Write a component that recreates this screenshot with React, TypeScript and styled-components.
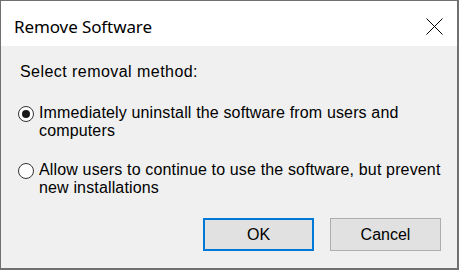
import React from 'react';
import styled, { createGlobalStyle } from 'styled-components';

const GlobalStyle = createGlobalStyle`
    html, body {
        margin: 0;
        padding: 0;
        background: #ffffff;
    }
    * {
        box-sizing: border-box;
    }
`;

const Window = styled.div`
    width: 459px;
    height: 270px;
    border: 1px solid #707070;
    border-right-width: 2px;
    border-bottom-width: 2px;
    display: flex;
    flex-direction: column;
    background: #f0f0f0;
    overflow: hidden;
`;

const TitleBar = styled.div`
    height: 45px;
    flex-shrink: 0;
    background: #ffffff;
    display: flex;
    align-items: center;
    justify-content: space-between;
    padding: 0 14px 0 13px;
`;

const Title = styled.span`
    font-family: "Noto Sans", "Open Sans", sans-serif;
    font-size: 17px;
    letter-spacing: -0.1px;
    color: #000000;
    margin-top: 6px;
`;

const CloseButton = styled.div`
    width: 18px;
    height: 18px;
    display: flex;
    align-items: center;
    justify-content: center;
    margin-top: 6px;
`;

const Body = styled.div`
    flex: 1;
    display: flex;
    flex-direction: column;
    padding: 17px 16px 0 17px;
    font-family: "Liberation Sans", Arial, sans-serif;
    font-size: 16px;
    letter-spacing: 0.15px;
    line-height: 18px;
    color: #000000;
`;

const Label = styled.div`
    letter-spacing: 0.45px;
    padding-left: 2px;
`;

const Options = styled.div`
    display: flex;
    flex-direction: column;
    gap: 21px;
    margin-top: 23px;
`;

const Option = styled.div`
    display: flex;
    align-items: flex-start;
    gap: 5px;
`;

const Radio = styled.span<{ $checked?: boolean }>`
    width: 16px;
    height: 16px;
    margin-top: 2px;
    flex-shrink: 0;
    border: 1px solid #333333;
    border-radius: 50%;
    background: #ffffff;
    display: flex;
    align-items: center;
    justify-content: center;
    &::after {
        content: '';
        display: ${p => (p.$checked ? 'block' : 'none')};
        width: 8px;
        height: 8px;
        border-radius: 50%;
        background: #1a1a1a;
    }
`;

const OptionText = styled.span`
    white-space: nowrap;
`;

const Buttons = styled.div`
    display: flex;
    justify-content: flex-end;
    gap: 16px;
    margin-top: 21px;
`;

const Button = styled.button<{ $default?: boolean }>`
    width: 111px;
    height: 33px;
    background: #e1e1e1;
    border: 1px solid ${p => (p.$default ? '#0078d7' : '#adadad')};
    box-shadow: ${p => (p.$default ? 'inset 0 0 0 1px #0078d7' : 'none')};
    font-family: "Liberation Sans", Arial, sans-serif;
    font-size: 16px;
    color: #000000;
    padding: 0;
`;

const App = () => {
    return (
        <>
            <GlobalStyle />
            <Window>
                <TitleBar>
                    <Title>Remove Software</Title>
                    <CloseButton>
                        <svg width="17" height="17" viewBox="0 0 17 17">
                            <path d="M0.5 0.5 L16.5 16.5 M16.5 0.5 L0.5 16.5" stroke="#000" strokeWidth="1" fill="none" />
                        </svg>
                    </CloseButton>
                </TitleBar>
                <Body>
                    <Label>Select removal method:</Label>
                    <Options>
                        <Option>
                            <Radio $checked />
                            <OptionText>
                                Immediately uninstall the software from users and
                                <br />
                                computers
                            </OptionText>
                        </Option>
                        <Option>
                            <Radio />
                            <OptionText>
                                Allow users to continue to use the software, but prevent
                                <br />
                                new installations
                            </OptionText>
                        </Option>
                    </Options>
                    <Buttons>
                        <Button $default>OK</Button>
                        <Button>Cancel</Button>
                    </Buttons>
                </Body>
            </Window>
        </>
    );
};

export default App;
